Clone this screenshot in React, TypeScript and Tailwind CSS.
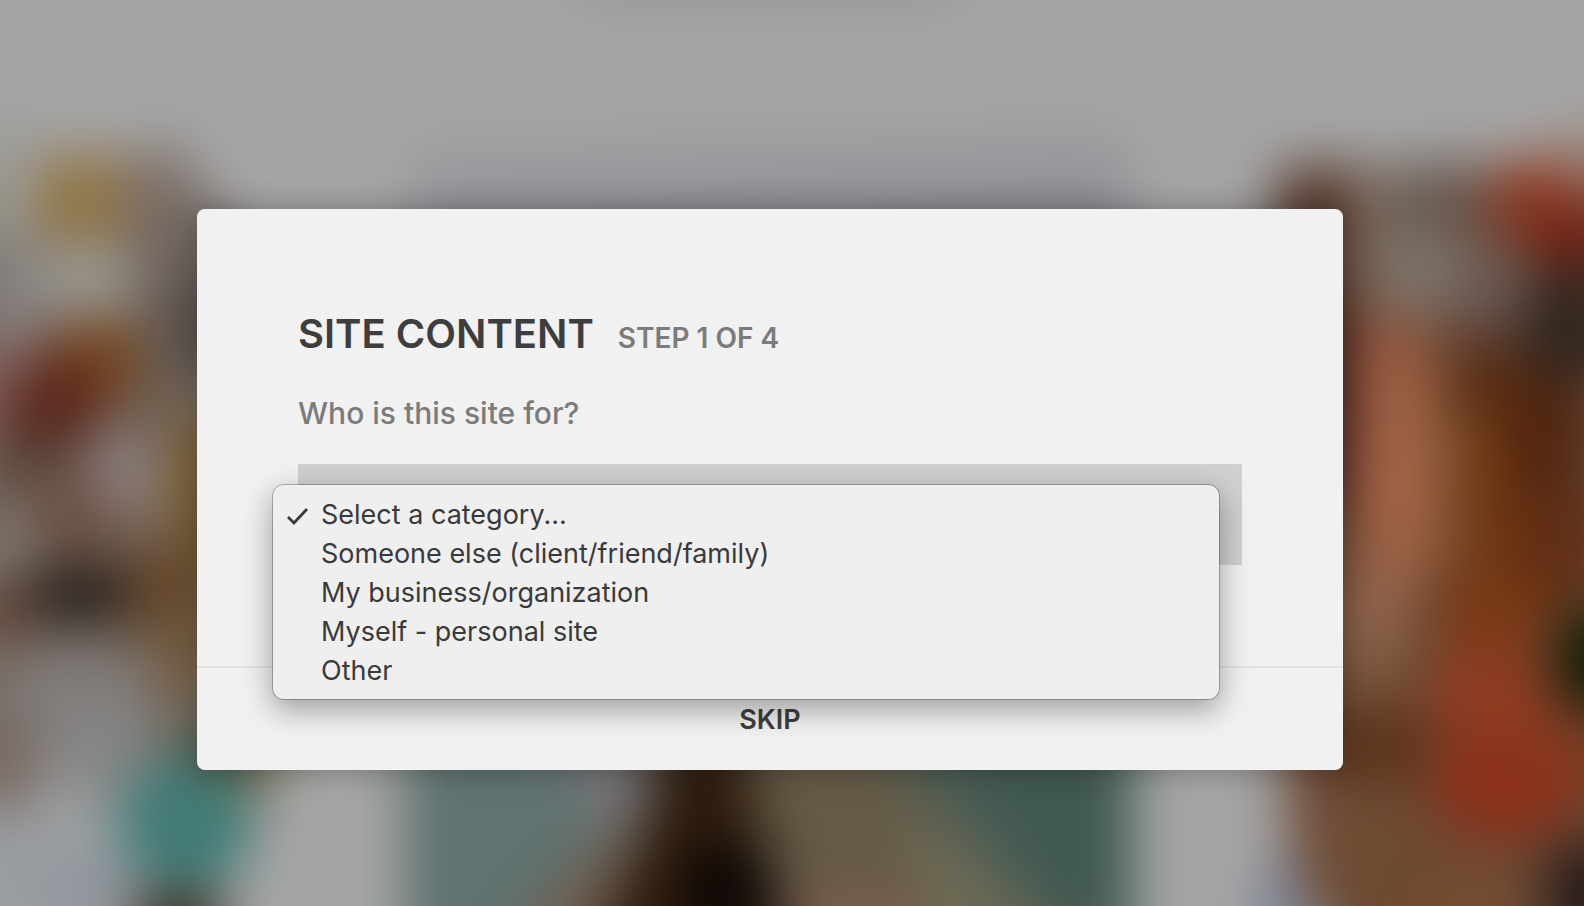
import { useState } from "react";
import type { MouseEvent } from "react";

const categories = [
  "Select a category...",
  "Someone else (client/friend/family)",
  "My business/organization",
  "Myself - personal site",
  "Other",
];

// cx, cy, rx, ry, fill
type Blob = [number, number, number, number, string];

const leftBlobs: Blob[] = [
  [5, 180, 40, 70, "#9d9d99"],
  [160, 205, 40, 60, "#7d7069"],
  [190, 245, 40, 50, "#6e625d"],
  [80, 200, 50, 50, "#917647"],
  [15, 285, 40, 44, "#82807f"],
  [85, 280, 52, 36, "#9c9b95"],
  [0, 325, 24, 30, "#8b7f83"],
  [200, 330, 40, 60, "#544c49"],
  [150, 380, 34, 60, "#6b5f54"],
  [95, 362, 44, 44, "#78441a"],
  [55, 402, 46, 44, "#5c2016"],
  [-10, 390, 28, 44, "#805a56"],
  [40, 445, 50, 24, "#52352a"],
  [10, 485, 34, 24, "#66574c"],
  [120, 472, 40, 40, "#8e8282"],
  [205, 490, 40, 90, "#7a5d32"],
  [75, 515, 34, 36, "#684839"],
  [5, 545, 34, 34, "#81776e"],
  [170, 590, 60, 50, "#66482c"],
  [190, 660, 44, 50, "#715a3d"],
  [0, 612, 30, 24, "#5d3a2c"],
  [78, 594, 56, 32, "#261e1a"],
  [80, 695, 80, 54, "#807b79"],
  [100, 750, 60, 50, "#868686"],
  [0, 775, 36, 44, "#75645d"],
  [20, 870, 110, 60, "#9a9ea2"],
  [80, 900, 50, 40, "#92959d"],
  [220, 750, 50, 30, "#4c5543"],
  [255, 775, 24, 20, "#6d5f3a"],
  [185, 825, 68, 68, "#407b76"],
  [178, 925, 50, 34, "#3a2a20"],
];

const rightBlobs: Blob[] = [
  [1320, 210, 46, 44, "#4c2c20"],
  [1380, 225, 40, 60, "#796a5f"],
  [1440, 200, 40, 40, "#655650"],
  [1425, 275, 64, 44, "#7d7369"],
  [1490, 290, 36, 40, "#6a5a55"],
  [1590, 165, 40, 34, "#977c6e"],
  [1530, 195, 40, 38, "#8f3c24"],
  [1565, 225, 44, 34, "#7e2416"],
  [1580, 262, 34, 20, "#551611"],
  [1570, 330, 50, 60, "#2e261f"],
  [1345, 260, 24, 60, "#66513f"],
  [1325, 400, 26, 130, "#47201f"],
  [1470, 340, 50, 20, "#5c3c30"],
  [1445, 450, 34, 110, "#80563a"],
  [1392, 370, 32, 60, "#9a583f"],
  [1395, 480, 36, 130, "#a66547"],
  [1490, 390, 44, 40, "#562a12"],
  [1500, 500, 44, 100, "#703812"],
  [1545, 440, 36, 70, "#4e220e"],
  [1595, 470, 24, 60, "#633e2c"],
  [1555, 555, 44, 56, "#602c14"],
  [1372, 620, 34, 56, "#936650"],
  [1490, 610, 56, 44, "#7a3913"],
  [1360, 680, 34, 30, "#7a573e"],
  [1375, 745, 60, 40, "#5c321c"],
  [1490, 700, 64, 60, "#8e3b20"],
  [1505, 790, 76, 50, "#8c2f18"],
  [1570, 760, 40, 40, "#86381f"],
  [1598, 662, 44, 52, "#0e1a05"],
  [1350, 840, 44, 60, "#704d35"],
  [1410, 885, 50, 50, "#6b492d"],
  [1470, 905, 60, 34, "#774d30"],
  [1590, 895, 46, 56, "#241a18"],
  [1282, 915, 24, 60, "#788094"],
];

function Blobs({ items }: { items: Blob[] }) {
  return (
    <>
      {items.map(([cx, cy, rx, ry, fill], i) => (
        <ellipse key={i} cx={cx} cy={cy} rx={rx} ry={ry} fill={fill} />
      ))}
    </>
  );
}

function Backdrop() {
  return (
    <svg
      aria-hidden="true"
      viewBox="0 0 1584 906"
      preserveAspectRatio="none"
      className="absolute inset-0 h-full w-full"
    >
      <defs>
        <filter
          id="soft"
          x="-200"
          y="-200"
          width="1984"
          height="1306"
          filterUnits="userSpaceOnUse"
          colorInterpolationFilters="sRGB"
        >
          <feGaussianBlur stdDeviation="27" />
        </filter>
        <linearGradient id="sky" x1="0" y1="0" x2="0.150" y2="1">
          <stop offset="0" stopColor="#a4a5a5" />
          <stop offset="0.5" stopColor="#95969a" />
          <stop offset="1" stopColor="#7b7e84" />
        </linearGradient>
      </defs>
      <g filter="url(#soft)">
        <rect x="-200" y="-200" width="1984" height="1306" fill="#a5a5a5" />
        <rect x="575" y="-60" width="385" height="62" fill="#969696" />

        <rect x="-60" y="160" width="255" height="600" fill="#75685e" />
        <Blobs items={leftBlobs} />

        <rect x="410" y="120" width="720" height="150" fill="url(#sky)" />
        <rect x="404" y="500" width="728" height="600" fill="#5f7370" />
        <path d="M940 700H1132V1100H1090Z" fill="#3f5850" />
        <path d="M880 720L960 740L1110 960H1000Z" fill="#485c54" />
        <path d="M560 720H680L630 830L590 830Z" fill="#787478" />
        <path d="M650 810L560 870L480 980H640Z" fill="#6f6053" />
        <path d="M730 700H850L1080 980H760Z" fill="#645a46" />
        <path d="M900 800L960 840L1070 960H930Z" fill="#6d6a55" />
        <path d="M790 890H900L940 980H790Z" fill="#7a5d4c" />
        <path d="M665 700H735L755 810L800 980H580L645 830Z" fill="#2c1b0c" />
        <ellipse cx="728" cy="890" rx="44" ry="44" fill="#080404" />

        <path d="M1278 168H1700V1000H1350L1290 850L1278 720Z" fill="#6b4a36" />
        <Blobs items={rightBlobs} />
      </g>
    </svg>
  );
}

export default function App() {
  const [selected, setSelected] = useState(categories[0]);
  const [open, setOpen] = useState(true);

  const toggleMenu = (e: MouseEvent) => {
    e.preventDefault();
    setOpen(!open);
  };

  const choose = (category: string) => {
    setSelected(category);
    setOpen(false);
  };

  return (
    <main className="relative min-h-screen overflow-hidden bg-[#a5a5a5] pt-[209px] pr-[241px] pb-[135px] pl-[197px] font-['Inter',sans-serif]">
      <Backdrop />
      <form
        className="relative rounded-lg bg-[#f1f1f1] shadow-[0_0_30px_rgba(0,0,0,0.3)]"
        onSubmit={e => e.preventDefault()}
      >
        <div className="p-[101px]">
          <header className="flex items-baseline gap-6">
            <h1 className="text-[40px] leading-12 font-semibold text-[#3e3e3e]">SITE CONTENT</h1>
            <p className="text-[28px] leading-8 font-semibold text-[#7b7b7b]">STEP 1 OF 4</p>
          </header>
          <label
            htmlFor="category"
            className="mt-[35px] block text-[30px] leading-10 font-medium text-[#7b7b7b]"
          >
            Who is this site for?
          </label>
          <div className="relative mt-[31px]">
            <select
              id="category"
              value={selected}
              onChange={e => setSelected(e.target.value)}
              onMouseDown={toggleMenu}
              className="block h-[101px] w-full appearance-none bg-[#d0d0d0] px-6 text-[27px] text-[#3e3e3e] outline-none"
            >
              {categories.map(category => (
                <option key={category}>{category}</option>
              ))}
            </select>
            {open && (
              <ul className="absolute top-5 right-[22px] -left-[26px] z-10 rounded-xl border border-black/25 bg-[#efefef] bg-clip-padding pt-[10px] pb-[9px] shadow-[0_10px_30px_rgba(0,0,0,0.35)]">
                {categories.map(category => (
                  <li key={category}>
                    <button
                      type="button"
                      onClick={() => choose(category)}
                      className="flex w-full items-center gap-3 pl-3 text-left text-[27px] leading-[39px] text-[#3a3a3a]"
                    >
                      <svg viewBox="0 0 24 24" className="h-6 w-6" aria-hidden="true">
                        {category === selected && (
                          <path
                            d="M3 14L9 20L22 6"
                            fill="none"
                            stroke="currentColor"
                            strokeWidth="2.8"
                          />
                        )}
                      </svg>
                      {category}
                    </button>
                  </li>
                ))}
              </ul>
            )}
          </div>
        </div>
        <footer className="border-t-2 border-[#e3e3e3]">
          <button
            type="button"
            className="block w-full pt-[34px] pb-8 text-[27px] leading-9 font-semibold text-[#3e3e3e]"
          >
            SKIP
          </button>
        </footer>
      </form>
    </main>
  );
}
